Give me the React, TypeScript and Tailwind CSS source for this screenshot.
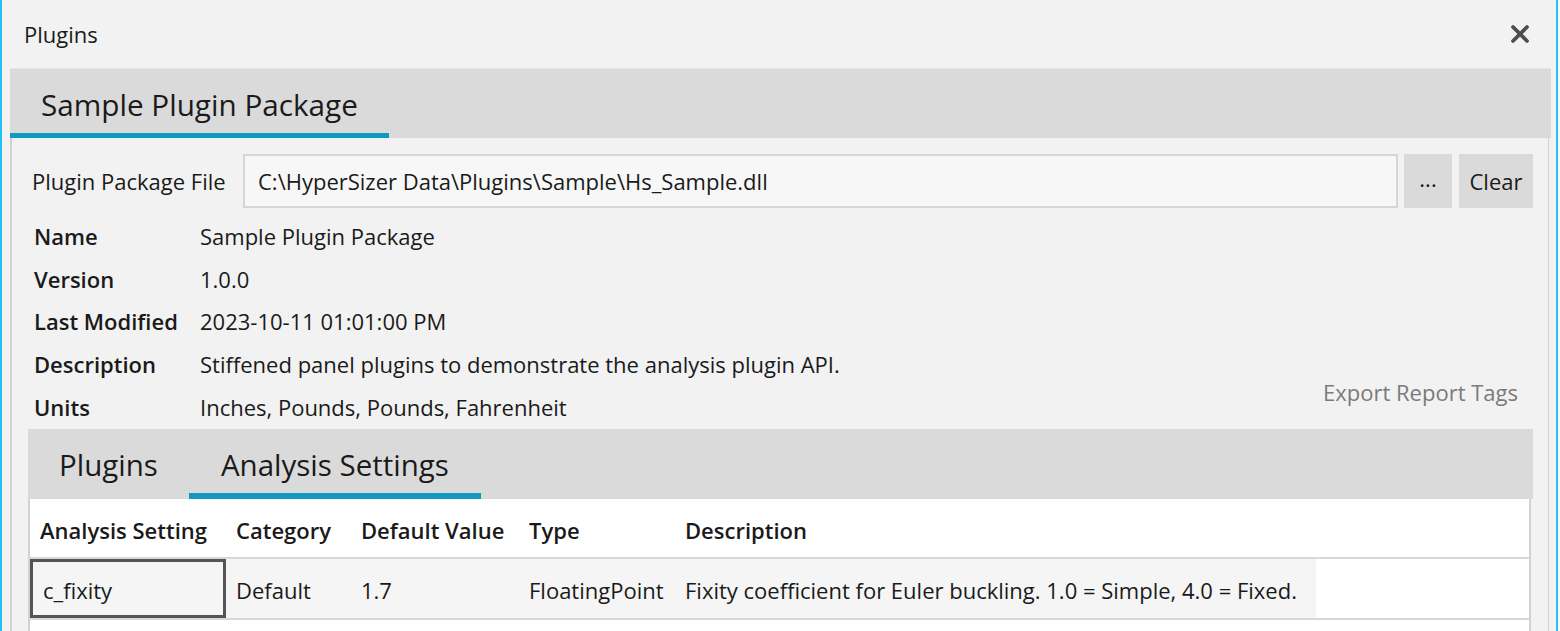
import { X } from "lucide-react";

const info: { label: string; value: string }[] = [
  { label: "Name", value: "Sample Plugin Package" },
  { label: "Version", value: "1.0.0" },
  { label: "Last Modified", value: "2023-10-11 01:01:00 PM" },
  { label: "Description", value: "Stiffened panel plugins to demonstrate the analysis plugin API." },
  { label: "Units", value: "Inches, Pounds, Pounds, Fahrenheit" },
];

const columns: { title: string; width: string }[] = [
  { title: "Analysis Setting", width: "w-[196px]" },
  { title: "Category", width: "w-[125px]" },
  { title: "Default Value", width: "w-[168px]" },
  { title: "Type", width: "w-[156px]" },
  { title: "Description", width: "w-[641px]" },
];

const row = ["c_fixity", "Default", "1.7", "FloatingPoint", "Fixity coefficient for Euler buckling. 1.0 = Simple, 4.0 = Fixed."];

export default function App() {
  return (
    <div className="flex h-[631px] w-[1560px] overflow-hidden bg-[#f7f7f7] font-['Open_Sans',sans-serif] text-[22px] text-[#1a1a1a]">
      <div className="flex w-[1558px] flex-col border-l-2 border-r-2 border-[#22c3f0] bg-[#f2f2f2]">
        {/* title bar */}
        <div className="flex h-[68px] shrink-0 items-center justify-between pl-[22px] pr-[22px]">
          <span>Plugins</span>
          <X size={28} strokeWidth={3.2} className="text-[#4d4d4d]" />
        </div>

        <div className="ml-[8px] mr-[5px] flex flex-1 flex-col">
          {/* outer tab strip */}
          <div className="flex h-[70px] shrink-0 items-end border-t border-[#e4e4e4] bg-[#dadada]">
            <div className="border-b-[5px] border-[#0e9ac3] px-[31px] pb-[8px] text-[29.7px] leading-[40px]">
              Sample Plugin Package
            </div>
          </div>

          {/* panel */}
          <div className="mr-[2px] flex flex-1 flex-col border-l-2 border-r border-[#d2d2d2] pl-[16px] pr-[15px] pt-[16px]">
            <div className="flex h-[54px] items-stretch pl-[4px]">
              <div className="flex w-[211px] items-center">Plugin Package File</div>
              <div className="flex flex-1 items-center border-2 border-[#d6d6d6] bg-[#f7f7f7] px-[13px]">
                C:\HyperSizer Data\Plugins\Sample\Hs_Sample.dll
              </div>
              <button className="ml-[6px] flex w-[48px] items-center justify-center bg-[#dadada] pb-[6px]">...</button>
              <button className="ml-[7px] flex w-[74px] items-center justify-center bg-[#dadada]">Clear</button>
            </div>

            <div className="mt-[7px] flex h-[214px] shrink-0">
              <div className="flex flex-1 flex-col pl-[6px]">
                {info.map(({ label, value }) => (
                  <div key={label} className="flex h-[42.75px] shrink-0 items-center">
                    <span className="w-[166px] font-semibold">{label}</span>
                    <span>{value}</span>
                  </div>
                ))}
              </div>
              <div className="mb-[20px] mr-[15px] self-end text-[#7a7a7a]">Export Report Tags</div>
            </div>

            {/* inner tabs */}
            <div className="flex flex-1 flex-col">
              <div className="flex h-[70px] shrink-0 items-end bg-[#dadada]">
                <div className="border-b-[6px] border-transparent px-[31px] pb-[8px] text-[29.5px] leading-[40px]">Plugins</div>
                <div className="border-b-[6px] border-[#0e9ac3] px-[32px] pb-[8px] text-[29.5px] leading-[40px]">Analysis Settings</div>
              </div>
              <div className="mr-[2px] flex flex-1 flex-col border-l-2 border-r-2 border-[#d2d2d2] bg-white">
                <div className="flex h-[60px] shrink-0 items-center border-b-2 border-[#d8d8d8] pt-[4px]">
                  {columns.map((c) => (
                    <div key={c.title} className={`${c.width} shrink-0 pl-[10px] font-semibold`}>
                      {c.title}
                    </div>
                  ))}
                </div>
                <div className="flex h-[61px] shrink-0 border-b-2 border-[#d8d8d8]">
                  {row.map((cell, i) => (
                    <div
                      key={i}
                      className={`${columns[i].width} flex shrink-0 items-center bg-[#f5f5f5] pl-[10px] pt-[4px] ${
                        i === 0 ? "border-[3px] border-[#555555] pl-[7px]" : ""
                      }`}
                    >
                      {cell}
                    </div>
                  ))}
                </div>
              </div>
            </div>
          </div>
        </div>
      </div>
    </div>
  );
}
